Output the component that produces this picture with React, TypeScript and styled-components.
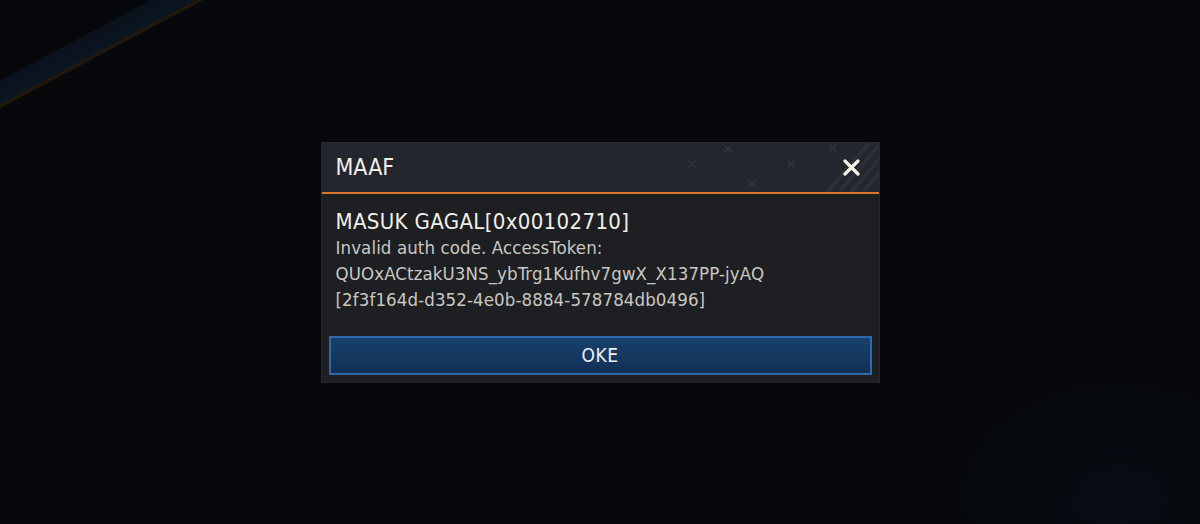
import React from "react"
import styled, { createGlobalStyle } from "styled-components"

const GlobalStyle = createGlobalStyle`
  html, body {
    margin: 0;
    padding: 0;
    background: #05070b;
  }
  #root {
    width: 1200px;
    height: 524px;
  }
`

const Screen = styled.div`
  width: 1200px;
  height: 524px;
  display: flex;
  align-items: center;
  justify-content: center;
  overflow: hidden;
  background:
    radial-gradient(ellipse 300px 220px at 1120px 500px, rgba(16, 26, 38, 0.25), transparent 70%),
    linear-gradient(
      152deg,
      #05070b 0px,
      #05070b 70px,
      #0a121c 72px,
      #0b1520 91px,
      #22170c 93px,
      #22170c 95px,
      #06080c 96px,
      #05070b 100%
    );
  font-family: "DejaVu Sans Condensed", "DejaVu Sans", sans-serif;
`

const Dialog = styled.div`
  width: 557px;
  height: 239px;
  display: flex;
  flex-direction: column;
  background: #1e1f23;
  box-shadow: 0 0 0 1px #25272c;
`

const Header = styled.div`
  position: relative;
  height: 49px;
  display: flex;
  align-items: center;
  justify-content: space-between;
  padding: 0 16px 0 14px;
  background: #23262d;
  border-bottom: 2px solid #d7762f;
  overflow: hidden;
`

const Title = styled.h1`
  margin: 0;
  font-size: 23px;
  font-weight: 400;
  color: #f2efe8;
  z-index: 1;
`

const Decor = styled.svg`
  position: absolute;
  left: 0;
  top: 0;
  pointer-events: none;
`

const CloseButton = styled.button`
  width: 22px;
  height: 22px;
  padding: 0;
  border: none;
  background: transparent;
  display: flex;
  align-items: center;
  justify-content: center;
  cursor: pointer;
  z-index: 1;
`

const Body = styled.div`
  flex: 1;
  display: flex;
  flex-direction: column;
  justify-content: space-between;
  padding: 15px 7px 7px;
`

const Message = styled.div`
  padding: 0 7px;
`

const ErrorTitle = styled.h2`
  margin: 0;
  font-size: 22px;
  line-height: 26px;
  font-weight: 400;
  letter-spacing: 0.35px;
  color: #f2efe8;
`

const ErrorText = styled.p`
  margin: 0;
  font-size: 18.5px;
  line-height: 26px;
  letter-spacing: 0.1px;
  color: #c9c7c2;
`

const OkButton = styled.button`
  height: 39px;
  width: 100%;
  border: 2px solid #2e6aa8;
  background: linear-gradient(#18406c, #122f55);
  color: #eef2f6;
  font-family: "DejaVu Sans Condensed", "DejaVu Sans", sans-serif;
  font-size: 19px;
  letter-spacing: 0.5px;
  cursor: pointer;
`

// faint crosses in the header, coordinates relative to the dialog
const crosses = [
  [370, 21],
  [406, 6],
  [430, 40],
  [469, 21],
  [511, 5],
]

export default function App() {
  return (
    <>
      <GlobalStyle />
      <Screen>
        <Dialog>
          <Header>
            <Decor width="557" height="49" viewBox="0 0 557 49">
              {crosses.map(([x, y], i) => (
                <g key={i} transform={`translate(${x} ${y}) rotate(45)`} stroke="#30343c" strokeWidth="1.6">
                  <line x1="-5" y1="0" x2="5" y2="0" />
                  <line x1="0" y1="-5" x2="0" y2="5" />
                </g>
              ))}
              <g stroke="#2b2f37" strokeWidth="4">
                <line x1="505" y1="49" x2="547" y2="0" />
                <line x1="517" y1="49" x2="559" y2="0" />
                <line x1="529" y1="49" x2="571" y2="0" />
                <line x1="541" y1="49" x2="583" y2="0" />
              </g>
            </Decor>
            <Title>MAAF</Title>
            <CloseButton aria-label="Tutup">
              <svg width="17" height="17" viewBox="0 0 17 17">
                <path d="M2 2 L15 15 M15 2 L2 15" stroke="#f4f0e4" strokeWidth="3.2" strokeLinecap="round" />
              </svg>
            </CloseButton>
          </Header>
          <Body>
            <Message>
              <ErrorTitle>MASUK GAGAL[0x00102710]</ErrorTitle>
              <ErrorText>
                Invalid auth code. AccessToken:
                <br />
                QUOxACtzakU3NS_ybTrg1Kufhv7gwX_X137PP-jyAQ
                <br />
                [2f3f164d-d352-4e0b-8884-578784db0496]
              </ErrorText>
            </Message>
            <OkButton>OKE</OkButton>
          </Body>
        </Dialog>
      </Screen>
    </>
  )
}
